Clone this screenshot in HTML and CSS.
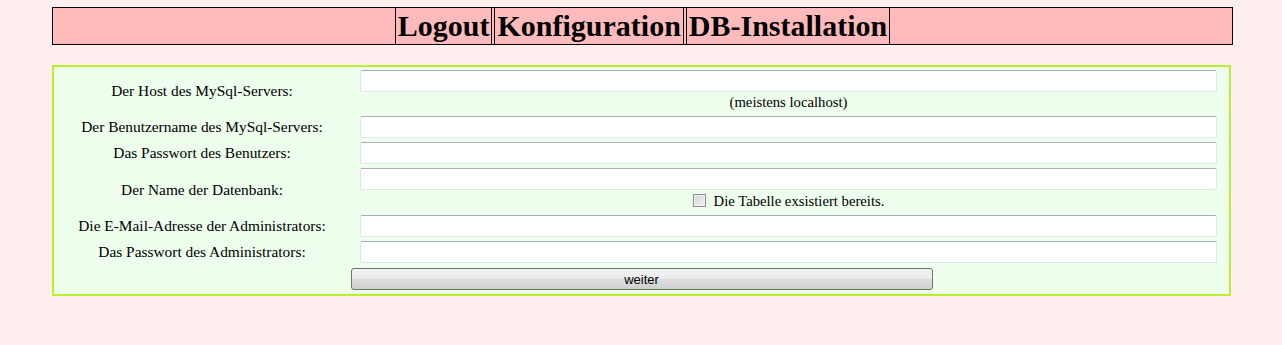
FILE: index.html
```html
<!DOCTYPE html>
<html lang="de">
<head>
    <meta charset="UTF-8">
    <title>DB-Installation</title>
    <link rel="stylesheet" href="styles.css">
</head>
<body>
    <!-- Menue -->
    <div class="menu">
        <div class="spacer"></div>
        <a class="menu-item" href="#">Logout</a>
        <a class="menu-item" href="#">Konfiguration</a>
        <a class="menu-item" href="#">DB-Installation</a>
        <div class="spacer"></div>
    </div>

    <!-- Installationsformular -->
    <form class="install" onsubmit="return false">
        <div class="fields">
            <label class="caption" for="host">Der Host des MySql-Servers:</label>
            <div class="field">
                <input type="text" id="host">
                <div class="hint">(meistens localhost)</div>
            </div>

            <label class="caption" for="user">Der Benutzername des MySql-Servers:</label>
            <div class="field"><input type="text" id="user"></div>

            <label class="caption" for="pass">Das Passwort des Benutzers:</label>
            <div class="field"><input type="password" id="pass"></div>

            <label class="caption" for="dbname">Der Name der Datenbank:</label>
            <div class="field">
                <input type="text" id="dbname">
                <div class="hint check">
                    <input type="checkbox" id="exists">
                    <label for="exists">Die Tabelle exsistiert bereits.</label>
                </div>
            </div>

            <label class="caption" for="mail">Die E-Mail-Adresse der Administrators:</label>
            <div class="field"><input type="text" id="mail"></div>

            <label class="caption" for="adminpass">Das Passwort des Administrators:</label>
            <div class="field"><input type="password" id="adminpass"></div>
        </div>
        <div class="actions">
            <button type="submit">weiter</button>
        </div>
    </form>
</body>
</html>
```

FILE: styles.css
```css
/* Seite */
body {
    margin: 7px 8px;
    background: #ffeeee;
    font-family: "Liberation Serif", "Times New Roman", serif;
    font-size: 15.4px;
    color: #000;
}

/* Menue oben */
.menu {
    display: flex;
    width: 1179px;
    height: 36px;
    margin-left: 44px;
    border: 1px solid #000;
    background: #ffbbbb;
}

.menu .spacer {
    flex: 1;
}

.menu-item {
    padding: 0 2px;
    border-left: 1px solid #000;
    border-right: 1px solid #000;
    font-size: 30px;
    font-weight: bold;
    line-height: 36px;
    color: #000;
    text-decoration: none;
}

.menu-item + .menu-item {
    margin-left: 2px;
}

/* Formular */
.install {
    width: 1175px;
    margin: 20px 0 0 44px;
    padding: 3px 0 4px;
    background: #eeffee;
    border: 2px solid #b8f02c;
}

.fields {
    display: grid;
    grid-template-columns: 302px 1fr;
    column-gap: 4px;
    row-gap: 4px;
    align-items: center;
    padding-right: 12px;
}

.caption {
    padding-right: 6px;
    text-align: center;
}

.field input[type="text"],
.field input[type="password"] {
    display: block;
    width: 100%;
    height: 22px;
    box-sizing: border-box;
    margin: 0;
    border: 1px solid #e2e5ea;
    border-top-color: #abadb3;
    border-radius: 2px;
    background: #fff;
}

.hint {
    height: 20px;
    line-height: 20px;
    font-size: 14.7px;
    text-align: center;
}

.hint.check {
    height: 21px;
    display: flex;
    justify-content: center;
    align-items: center;
    gap: 8px;
}

.hint.check input {
    appearance: none;
    width: 13px;
    height: 13px;
    margin: 0;
    border: 1px solid #8e8f8f;
    background: linear-gradient(135deg, #d4d4d4, #f4f4f4);
    box-shadow: inset 0 0 0 1px #f2f2f2;
}

.actions {
    margin-top: 5px;
    text-align: center;
}

.actions button {
    width: 582px;
    height: 22px;
    border: 1px solid #707070;
    border-radius: 3px;
    background: linear-gradient(#f2f2f2, #ebebeb 50%, #dddddd 50%, #cfcfcf);
    font-family: "Liberation Sans", Arial, sans-serif;
    font-size: 13px;
    color: #000;
    cursor: pointer;
}
```
